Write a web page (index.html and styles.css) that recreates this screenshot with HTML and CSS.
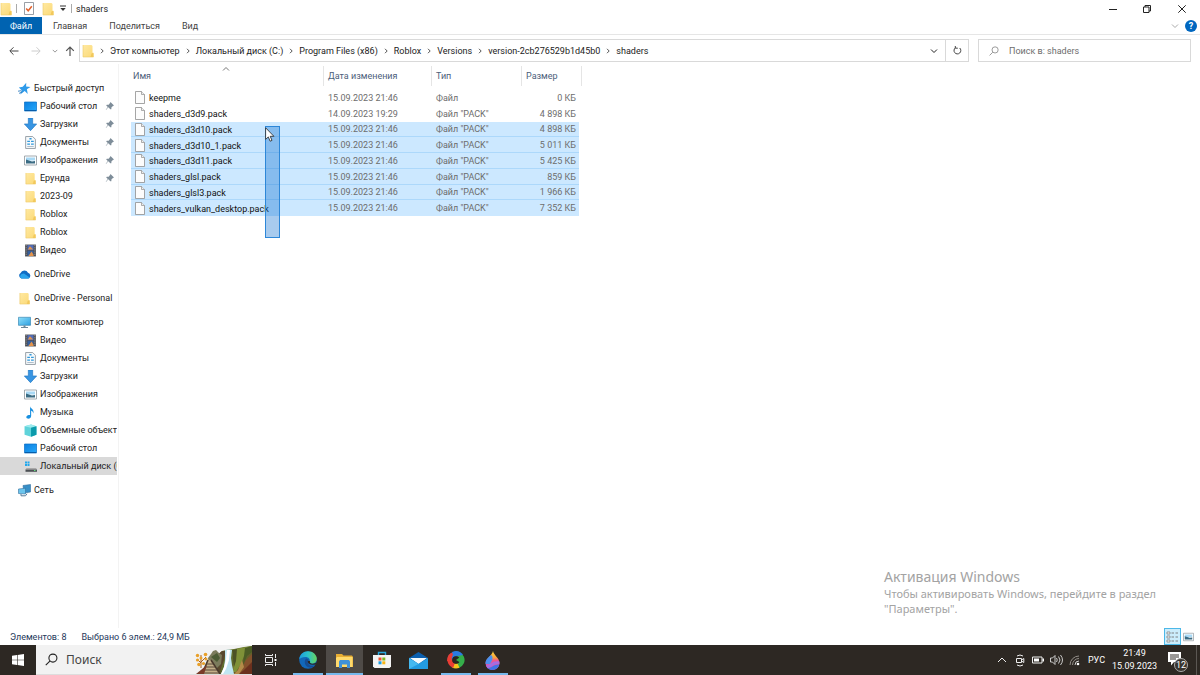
FILE: index.html
```html
<!DOCTYPE html>
<html lang="ru">
<head>
<meta charset="utf-8">
<meta name="viewport" content="width=device-width, initial-scale=1">
<title>shaders</title>
<link rel="stylesheet" href="styles.css">
</head>
<body>
<svg class="sprite" aria-hidden="true">
  <defs>
    <linearGradient id="g-folder" x1="0" y1="0" x2="1" y2="1"><stop offset="0" stop-color="#ffe9a2"/><stop offset="1" stop-color="#fbd976"/></linearGradient>
    <linearGradient id="g-screen" x1="0" y1="0" x2="1" y2="1"><stop offset="0" stop-color="#0b7fe0"/><stop offset="1" stop-color="#25a8fa"/></linearGradient>
    <linearGradient id="g-pc" x1="0" y1="0" x2="1" y2="1"><stop offset="0" stop-color="#8fe0fb"/><stop offset="1" stop-color="#2d9fe0"/></linearGradient>
    <linearGradient id="g-edge" x1="0" y1="0" x2="1" y2="0"><stop offset="0" stop-color="#1d9bdf"/><stop offset=".5" stop-color="#2cc3c8"/><stop offset="1" stop-color="#6ad45a"/></linearGradient>
    <linearGradient id="g-drop" x1="0" y1="0" x2="0" y2="1"><stop offset="0" stop-color="#ffd93a"/><stop offset=".35" stop-color="#f9a33f"/><stop offset=".5" stop-color="#f0568c"/><stop offset="1" stop-color="#c05ad0"/></linearGradient>
    <linearGradient id="g-cliff" x1="0" y1="0" x2="1" y2="1"><stop offset="0" stop-color="#7d8a3c"/><stop offset=".5" stop-color="#5d6a2c"/><stop offset="1" stop-color="#7a4526"/></linearGradient>
  </defs>
  <symbol id="folder" viewBox="0 0 12 14"><path d="M1 1h8.500l1 1v6.500l1 1V13H1z" fill="url(#g-folder)"/><path d="M9.500 9.500 11.500 8.800V13H8.500z" fill="#f2c85b"/><path d="M1 1v12h10.500" fill="none" stroke="#edc965" stroke-width=".6"/></symbol>
  <symbol id="file" viewBox="0 0 10 13"><path d="M.5.5h6l3 3v9h-9z" fill="#fcfcfc" stroke="#8e8e8e" stroke-width=".8"/><path d="M6.500.5v3h3" fill="#eee" stroke="#8e8e8e" stroke-width=".7"/></symbol>
  <symbol id="star" viewBox="0 0 12 12"><path d="M7.600.8 7.500 4.200l4 .4-3.300 2.200.8 4.200-2.800-2.600L2 11.500l1.400-4L.8 5l3.600-.6z" fill="#2f9bea"/><path d="M0 8.500 3 8M1 10.500l3-1.500" stroke="#2878bd" stroke-width=".8"/></symbol>
  <symbol id="desktop" viewBox="0 0 13 12"><path d="M.5 1.500h12v9H.5z" fill="url(#g-screen)" stroke="#0a70c6" stroke-width=".7"/><path d="M1 10h11" stroke="#075da9"/></symbol>
  <symbol id="down" viewBox="0 0 12 12"><path d="M4 0h4v5.500h3.700L6 11.700.3 5.500H4z" fill="#3895e2" stroke="#2177c2" stroke-width=".6"/></symbol>
  <symbol id="docs" viewBox="0 0 12 12"><path d="M1.500.5h6.500l2.500 2.500v8.500h-9z" fill="#f7fafc" stroke="#8b949c" stroke-width=".8"/><path d="M5 2.500h2M3 5h2.500M6.500 5H9M3 7.500h2.500M6.500 7.500H9" stroke="#3199db" stroke-width="1.300"/><path d="M3 9.700h6" stroke="#9babb8" stroke-width=".7"/></symbol>
  <symbol id="pics" viewBox="0 0 13 12"><path d="M.5 1.500h12v9H.5z" fill="#fff" stroke="#8c959c" stroke-width=".8"/><path d="M2 3h9v3H2z" fill="#a9d9f5"/><path d="m2 5 3 1 3 1 3-.5V9H2z" fill="#3b6c84"/></symbol>
  <symbol id="video" viewBox="0 0 12 12"><path d="M1 .5h10v11H1z" fill="#4b4d52"/><path d="M3.200 1h5.600v4.700H3.200z" fill="#526db8"/><path d="M3.200 6.300h5.600V11H3.200z" fill="#365f9d"/><path d="m3.500 5 2-3 3 3zM4 11l3-4 1.800 3v1z" fill="#e2934a"/><path d="M2 1v10M10 1v10" stroke="#b9b9b9" stroke-width=".7" stroke-dasharray="1 1"/></symbol>
  <symbol id="cloud" viewBox="0 0 13 12"><path d="M3.500 10A3 3 0 0 1 2.600 4.500 4 4 0 0 1 10 4.300 3 3 0 0 1 10.500 10z" fill="#0f6cc4"/><path d="M3.200 10a2.700 2.700 0 0 1 .5-4.500L6 5l6 4.300-1.500.7z" fill="#29a3ec"/></symbol>
  <symbol id="pc" viewBox="0 0 13 12"><path d="M.5.800h12v8H.5z" fill="url(#g-pc)" stroke="#3c89b5" stroke-width=".7"/><path d="M5.500 9h2v1.500h-2zM3 10.500h7v1H3z" fill="#6c8798"/></symbol>
  <symbol id="music" viewBox="0 0 12 12"><path d="M5.600.3c.5 2.400 4.200 2.800 3 6.600-.2-1.700-1-2.400-2-2.600v5C6.500 11.300 4.700 12 3.300 11.600 1.400 11 2 8.700 4.300 8.300l1.300-.1z" fill="#1890e0"/></symbol>
  <symbol id="cube" viewBox="0 0 12 12"><path d="m.5 2 6-1.500L11.500 2v8l-5 1.700L.5 10z" fill="#5fd3da"/><path d="m.5 2 6-1.500L11.500 2l-5 1.500z" fill="#9cebee"/><path d="M6.500 3.500 11.500 2v8l-5 1.700z" fill="#0b9aab"/></symbol>
  <symbol id="disk" viewBox="0 0 13 12"><path d="M1 1h2v2H1zM3.500 1h2v2h-2zM1 3.500h2v2H1zM3.500 3.500h2v2h-2z" fill="#20a8ed"/><path d="M2.500 7.500h9.500l1 1.500H1.500z" fill="#a9a9a9"/><path d="M1.500 9H13v2.300H1.500z" fill="#4c5054"/><path d="M10 10h1.500" stroke="#5ee07a"/></symbol>
  <symbol id="net" viewBox="0 0 13 12"><path d="m5 1 7.500-1v7.500L6 8.500z" fill="#378fc7" stroke="#346f9d" stroke-width=".6"/><path d="m.5 4.500 7-.8v5.800L.5 9z" fill="#6bc5ed" stroke="#346f9d" stroke-width=".6"/><path d="M3 9.500v1.800h4.500l1.500-2" fill="none" stroke="#577d9b"/></symbol>
  <symbol id="pin" viewBox="0 0 10 10"><path d="m5.500 1 3.500 3.500-1 .4-1.500 1.300-.2 2-1 .1-2-2L1 9l-.2-.3 2-2.700-1.600-1.500.6-.8 1.900.1L5 2z" fill="#7e8d99"/></symbol>
  <symbol id="next" viewBox="0 0 8 8"><path d="m3 1.800 2.200 2.200L3 6.200" fill="none" stroke="#555"/></symbol>
  <symbol id="chev" viewBox="0 0 8 8"><path d="m1 2.500 3 3 3-3" fill="none" stroke="currentColor"/></symbol>
  <symbol id="loupe" viewBox="0 0 12 12"><circle cx="7.300" cy="4.700" r="3.700" fill="none" stroke="currentColor"/><path d="M4.500 7.500.7 11.300" stroke="currentColor"/></symbol>
</svg>

<main class="window">
  <header class="titlebar">
    <svg class="i-folder"><use href="#folder"/></svg>
    <span class="bar"></span>
    <button class="quick props" aria-label="Свойства"><svg width="10" height="13" viewBox="0 0 10 13"><path d="M.5.5h9v12h-9z" fill="#fff" stroke="#7f8790" stroke-width=".8"/><path d="m2.200 6.500 2 2.300 3.600-4.500" fill="none" stroke="#e2612c" stroke-width="1.500"/></svg></button>
    <button class="quick" aria-label="Новая папка"><svg class="i-folder"><use href="#folder"/></svg></button>
    <button class="quick small" aria-label="Настройка панели"><svg width="6" height="7" viewBox="0 0 6 7"><path d="M0 1h6" stroke="#333"/><path d="M.3 3h5.400L3 6z" fill="#333"/></svg></button>
    <span class="bar"></span>
    <h1>shaders</h1>
    <div class="controls">
      <button aria-label="Свернуть"><svg width="8" height="8" viewBox="0 0 8 8"><path d="M0 4.500h8" stroke="#222"/></svg></button>
      <button aria-label="Восстановить"><svg width="8" height="8" viewBox="0 0 8 8"><path d="M.5 2h5.500v5.500H.5zM2 2V.5h5.500V6H6" fill="none" stroke="#222"/></svg></button>
      <button aria-label="Закрыть"><svg width="8" height="8" viewBox="0 0 8 8"><path d="m.3.3 7.400 7.400M7.700.3.3 7.700" stroke="#222"/></svg></button>
    </div>
  </header>
  <nav class="ribbon">
    <button class="filetab">Файл</button>
    <button>Главная</button>
    <button>Поделиться</button>
    <button>Вид</button>
    <div class="ribbon-end">
      <button class="expand" aria-label="Развернуть ленту"><svg class="i8"><use href="#chev"/></svg></button>
      <button class="help">?</button>
    </div>
  </nav>
  <div class="navrow">
    <div class="arrows">
      <button aria-label="Назад"><svg width="10" height="10" viewBox="0 0 10 10"><path d="M9.500 5H1M4.500 1.300.8 5l3.700 3.700" fill="none" stroke="#444"/></svg></button>
      <button aria-label="Вперед"><svg width="10" height="10" viewBox="0 0 10 10"><path d="M.5 5H9M5.500 1.300 9.200 5 5.500 8.700" fill="none" stroke="#ccc"/></svg></button>
      <button class="recent" aria-label="Последние"><svg class="i6"><use href="#chev"/></svg></button>
      <button class="up" aria-label="Вверх"><svg width="10" height="10" viewBox="0 0 10 10"><path d="M5 10V1M1.200 4.800 5 1l3.800 3.800" fill="none" stroke="#555" stroke-width="1.200"/></svg></button>
    </div>
    <div class="address">
      <svg class="i-folder"><use href="#folder"/></svg>
      <svg class="sep"><use href="#next"/></svg><a href="#">Этот компьютер</a>
      <svg class="sep"><use href="#next"/></svg><a href="#">Локальный диск (C:)</a>
      <svg class="sep"><use href="#next"/></svg><a href="#">Program Files (x86)</a>
      <svg class="sep"><use href="#next"/></svg><a href="#">Roblox</a>
      <svg class="sep"><use href="#next"/></svg><a href="#">Versions</a>
      <svg class="sep"><use href="#next"/></svg><a href="#">version-2cb276529b1d45b0</a>
      <svg class="sep"><use href="#next"/></svg><a href="#">shaders</a>
      <button class="drop" aria-label="Предыдущие расположения"><svg class="i8"><use href="#chev"/></svg></button>
      <button class="refresh" aria-label="Обновить"><svg width="9" height="9" viewBox="0 0 9 9"><path d="M6.700 2A3.400 3.400 0 1 1 2.500 1.700M2.300 0v2.200h2.500" fill="none" stroke="#444"/></svg></button>
    </div>
    <label class="find"><svg class="i10"><use href="#loupe"/></svg><input type="text" placeholder="Поиск в: shaders" aria-label="Поиск в: shaders"></label>
  </div>

  <div class="content">
    <nav class="side">
      <section>
        <a href="#"><svg><use href="#star"/></svg><span>Быстрый доступ</span></a>
        <a class="sub" href="#"><svg><use href="#desktop"/></svg><span>Рабочий стол</span><svg class="pin"><use href="#pin"/></svg></a>
        <a class="sub" href="#"><svg><use href="#down"/></svg><span>Загрузки</span><svg class="pin"><use href="#pin"/></svg></a>
        <a class="sub" href="#"><svg><use href="#docs"/></svg><span>Документы</span><svg class="pin"><use href="#pin"/></svg></a>
        <a class="sub" href="#"><svg><use href="#pics"/></svg><span>Изображения</span><svg class="pin"><use href="#pin"/></svg></a>
        <a class="sub" href="#"><svg><use href="#folder"/></svg><span>Ерунда</span><svg class="pin"><use href="#pin"/></svg></a>
        <a class="sub" href="#"><svg><use href="#folder"/></svg><span>2023-09</span></a>
        <a class="sub" href="#"><svg><use href="#folder"/></svg><span>Roblox</span></a>
        <a class="sub" href="#"><svg><use href="#folder"/></svg><span>Roblox</span></a>
        <a class="sub" href="#"><svg><use href="#video"/></svg><span>Видео</span></a>
      </section>
      <section><a href="#"><svg><use href="#cloud"/></svg><span>OneDrive</span></a></section>
      <section><a href="#"><svg><use href="#folder"/></svg><span>OneDrive - Personal</span></a></section>
      <section>
        <a href="#"><svg><use href="#pc"/></svg><span>Этот компьютер</span></a>
        <a class="sub" href="#"><svg><use href="#video"/></svg><span>Видео</span></a>
        <a class="sub" href="#"><svg><use href="#docs"/></svg><span>Документы</span></a>
        <a class="sub" href="#"><svg><use href="#down"/></svg><span>Загрузки</span></a>
        <a class="sub" href="#"><svg><use href="#pics"/></svg><span>Изображения</span></a>
        <a class="sub" href="#"><svg><use href="#music"/></svg><span>Музыка</span></a>
        <a class="sub" href="#"><svg><use href="#cube"/></svg><span>Объемные объекты</span></a>
        <a class="sub" href="#"><svg><use href="#desktop"/></svg><span>Рабочий стол</span></a>
        <a class="sub current" href="#"><svg><use href="#disk"/></svg><span>Локальный диск (C:)</span></a>
      </section>
      <section><a href="#"><svg><use href="#net"/></svg><span>Сеть</span></a></section>
    </nav>

    <div class="files">
      <table>
        <colgroup><col class="c-name"><col class="c-date"><col class="c-type"><col class="c-size"></colgroup>
        <thead><tr><th>Имя<svg class="sort" viewBox="0 0 8 8"><path d="m1 5.500 3-3 3 3" fill="none" stroke="#777"/></svg></th><th>Дата изменения</th><th>Тип</th><th>Размер</th></tr></thead>
        <tbody>
          <tr><td><svg class="doc"><use href="#file"/></svg>keepme</td><td>15.09.2023 21:46</td><td>Файл</td><td>0 КБ</td></tr>
          <tr><td><svg class="doc"><use href="#file"/></svg>shaders_d3d9.pack</td><td>14.09.2023 19:29</td><td>Файл "PACK"</td><td>4 898 КБ</td></tr>
          <tr class="sel"><td><svg class="doc"><use href="#file"/></svg>shaders_d3d10.pack</td><td>15.09.2023 21:46</td><td>Файл "PACK"</td><td>4 898 КБ</td></tr>
          <tr class="sel"><td><svg class="doc"><use href="#file"/></svg>shaders_d3d10_1.pack</td><td>15.09.2023 21:46</td><td>Файл "PACK"</td><td>5 011 КБ</td></tr>
          <tr class="sel"><td><svg class="doc"><use href="#file"/></svg>shaders_d3d11.pack</td><td>15.09.2023 21:46</td><td>Файл "PACK"</td><td>5 425 КБ</td></tr>
          <tr class="sel"><td><svg class="doc"><use href="#file"/></svg>shaders_glsl.pack</td><td>15.09.2023 21:46</td><td>Файл "PACK"</td><td>859 КБ</td></tr>
          <tr class="sel"><td><svg class="doc"><use href="#file"/></svg>shaders_glsl3.pack</td><td>15.09.2023 21:46</td><td>Файл "PACK"</td><td>1 966 КБ</td></tr>
          <tr class="sel"><td><svg class="doc"><use href="#file"/></svg>shaders_vulkan_desktop.pack</td><td>15.09.2023 21:46</td><td>Файл "PACK"</td><td>7 352 КБ</td></tr>
        </tbody>
      </table>
      <div class="marquee"></div>
      <svg class="cursor" viewBox="0 0 10 15"><path d="M.6.8v11.600l2.700-2.500 1.800 4.300 1.900-.8-1.800-4.100h3.700z" fill="#fff" stroke="#222" stroke-width=".8"/></svg>
      <aside class="activation"><h2>Активация Windows</h2><p>Чтобы активировать Windows, перейдите в раздел "Параметры".</p></aside>
    </div>
  </div>

  <footer class="status">
    <span>Элементов: 8</span><span>Выбрано 6 элем.: 24,9 МБ</span>
    <div class="views">
      <button class="on" aria-label="Таблица"><svg width="13" height="12" viewBox="0 0 13 12"><path d="M1 1h3v2H1zM1 5h3v2H1zM1 9h3v2H1z" fill="#fff" stroke="#777" stroke-width=".7"/><path d="M5.500 2H8M9.500 2H12M5.500 6H8M9.500 6H12M5.500 10H8M9.500 10H12" stroke="#777" stroke-width=".9"/></svg></button>
      <button aria-label="Крупные значки"><svg width="11" height="10"><use href="#pics"/></svg></button>
    </div>
  </footer>
</main>

<footer class="taskbar">
  <button class="start" aria-label="Пуск"><svg width="12" height="12" viewBox="0 0 12 12"><path d="m0 1.700 5-.7v4.700H0zM5.600.9 12 0v5.700H5.600zM0 6.300h5V11l-5-.7zM5.600 6.300H12V12l-6.400-.9z" fill="#fff"/></svg></button>
  <label class="search"><svg width="13" height="13"><use href="#loupe"/></svg><input type="text" placeholder="Поиск" aria-label="Поиск">
    <svg class="scene" viewBox="0 0 57 28">
      <path d="M22 28 23 9l4-4 4-1 8-1 10-2 8-1v28z" fill="url(#g-cliff)"/>
      <path d="M22 28V9l5-4h4l-2 9-3 8-1 6z" fill="#58492e"/>
      <path d="M36 4 57 0v5L49 10l-3 8-5 8h-3l1-12z" fill="#7f9138"/>
      <path d="m37 4 5-1-1 12-2 6z" fill="#4c5226"/>
      <path d="m50 2 7-2v6l-5 4-4 9 1-9z" fill="#4b5c25"/>
      <path d="m57 8-6 6-4 8-7 6h17z" fill="#84512c"/>
      <path d="m57 16-8 8-5 4h13z" fill="#6b301d"/>
      <path d="m47 14-4 10-4 4h5l5-7z" fill="#b38b48"/>
      <path d="M30 4q4-1 7 0l-1 8 1 7 2 9H26l3-7 1-7z" fill="#bfe6f2"/>
      <path d="m32 4 3 0-1 10-3 9-3 5h-2l3-7 2-8z" fill="#fff"/>
      <path d="m13 12 3-4 2-3 3-1 3 3 3 2-1 9-4 4-8-5z" fill="#7b7b5c"/>
      <path d="m16 11 6-4 3 5-3 4z" fill="#4c5c35"/>
      <path d="M13 14h3l9 14H7z" fill="#c3ae88"/>
      <path d="M13 14 7 28M16 14l9 14" fill="none" stroke="#4a392c" stroke-width="1.600"/>
      <path d="M12 18h6M11 21h9M10 24h12M8 27h16" stroke="#5b4b3c" stroke-width="1.100"/>
      <path d="m1 28 11-9-3 9z" fill="#7a3b28"/>
      <path d="M6 22V9M6 16l5-5M6 17l-4-4" fill="none" stroke="#a9601f"/>
      <g fill="#e8a02a"><circle cx="2.500" cy="9.500" r="1.700"/><circle cx="2.500" cy="14" r="1.600"/><circle cx="6" cy="12" r="1.500"/><circle cx="10.500" cy="8.500" r="1.800"/><circle cx="11" cy="13" r="1.500"/><circle cx="4" cy="18.500" r="1.800"/><circle cx="8.500" cy="17.500" r="1.600"/></g>
    </svg>
  </label>
  <div class="apps">
    <button aria-label="Представление задач"><svg width="13" height="12" viewBox="0 0 13 12"><path d="M1.500 3.500h7v5h-7zM1.500 0v1.500h7V0M1.500 12v-1.500h7V12M11.500 0v4M11.500 8v4" fill="none" stroke="#eee"/><path d="M10.500 5h2v2h-2z" fill="#fff"/></svg></button>
    <button class="open" aria-label="Edge"><svg width="18" height="18" viewBox="0 0 18 18"><circle cx="9" cy="9" r="8.800" fill="#1268b9"/><path d="M.3 8.300C.7 3.200 4.400.2 9 .2c5 0 8.800 3.500 8.800 7.600 0 3-2 4.900-4.700 4.900-2 0-3-.8-2.600-1.600C11.600 8.300 9.700 6 6.300 6 3.500 6 1.100 7.200.3 8.300z" fill="url(#g-edge)"/><path d="M7.200 7.500c-2 1.700-2 5.700.7 8 2.700 2 6 1.300 8.400-1.300-2.800 1.200-6.400.5-7.500-2.300-.8-1.800.2-3 .8-3.500z" fill="#164d93"/><path d="M8.700 9.800c-.5 3.200 3.500 4.500 7.700 3.800l1.400-2c-3.600 2-7.800 1.300-6.700-1.600z" fill="#2b2825"/></svg></button>
    <button class="open active" aria-label="Проводник"><svg width="17" height="15" viewBox="0 0 17 15"><path d="M0 1h6l1.500 1.500H16L17 4v10H0z" fill="#e8ae33"/><path d="M1 4h15.500v10H0V5z" fill="#ffda6c"/><path d="M3 8.500 4 7h9l1 1.500V15h-3v-3.500H6V15H3z" fill="#3f91d8"/></svg></button>
    <button aria-label="Store"><svg width="18" height="18" viewBox="0 0 18 18"><path d="M5.500 5V1.500h7V5" fill="none" stroke="#28a7dd" stroke-width="1.400"/><path d="M0 4h18v11.500L16.500 17h-15L0 15.500z" fill="#f4f4f4"/><path d="M5.500 6.500h3v3h-3z" fill="#ef5030"/><path d="M9.300 6.500h3v3h-3z" fill="#7db922"/><path d="M5.500 10.300h3v3h-3z" fill="#199ee4"/><path d="M9.300 10.300h3v3h-3z" fill="#f9b516"/></svg></button>
    <button aria-label="Почта"><svg width="19" height="17" viewBox="0 0 19 17"><path d="M0 6 9.500 0 19 6v11H0z" fill="#0b5fae"/><path d="M1 6h17l-8.500 6z" fill="#f5fafc"/><path d="m0 6 9.500 6L19 6v11H0z" fill="#239be1"/><path d="m0 6 9.500 6L0 17z" fill="#45b9f0"/></svg></button>
    <button class="open" aria-label="Браузер"><svg width="18" height="18" viewBox="0 0 18 18"><g fill="none" stroke-width="5"><path d="M8.500 3a6 6 0 0 1 6.200 4.100" stroke="#35ae4a"/><path d="M14.500 6.500A6 6 0 0 1 11 14.700" stroke="#35ae4a"/><path d="M11.500 14.500A6 6 0 0 1 6 14.200" stroke="#f4c51d"/><path d="M7 14.700A6 6 0 0 1 3.200 7.500" stroke="#ea3d34"/><path d="M3.100 8A6 6 0 0 1 9.500 3.100" stroke="#2a7be2"/></g><path d="M0 10Q0 2 7 1L5 6 4 11z" fill="#ea3d34"/><path d="M5 1q7-3 11 3l-5 1-5-1z" fill="#2a7be2"/><circle cx="9" cy="9" r="3.800" fill="#292521"/><path d="m9 9 4-3 1 6z" fill="#35ae4a"/></svg></button>
    <button class="open" aria-label="Краски"><svg width="15" height="19" viewBox="0 0 15 19"><path d="M8 0c.5 4 6.500 7 6.500 12a7 7 0 0 1-14 0C.500 7.500 7 5 8 0z" fill="url(#g-drop)"/><path d="M.6 13C.2 8 4 6 6 4c3 2 1 6-1 9z" fill="#4a90f0"/><path d="M.9 14.500C5 14 8 9 14.400 10.500v2.800C9 12 6 17 2.500 17.200z" fill="#a96be0"/><path d="M2.500 17C7 17 9 13 14.400 13.500 13 19 6.500 20.500 2.500 17z" fill="#3f74e8"/></svg></button>
  </div>
  <div class="tray">
    <button aria-label="Скрытые значки"><svg width="10" height="8" viewBox="0 0 10 8"><path d="m1 6 4-4 4 4" fill="none" stroke="#eee"/></svg></button>
    <button aria-label="Камера"><svg width="10" height="13" viewBox="0 0 10 13"><path d="M1.500 4.500h5v4h-5zM6.500 6l2.300-1.500v4L6.500 7" fill="none" stroke="#eee"/><path d="M2 2q3-2 6 0M2 11q3 2 6 0" fill="none" stroke="#eee"/></svg></button>
    <button aria-label="Батарея"><svg width="12" height="8" viewBox="0 0 12 8"><path d="M.5 1h9.500v6H.5z" fill="none" stroke="#eee"/><path d="M2 2.500h5v3H2zM10.500 2.500H12v3h-1.500z" fill="#fff"/></svg></button>
    <button aria-label="Громкость"><svg width="13" height="12" viewBox="0 0 13 12"><path d="M.5 4h2L5 1.500v9L2.500 8h-2zM6.500 4q1.500 2 0 4M8.500 2.500q3 3.500 0 7M10.500 1q4 5 0 10" fill="none" stroke="#ddd" stroke-width=".9"/></svg></button>
    <button aria-label="Сеть"><svg width="11" height="11" viewBox="0 0 11 11"><g fill="none" stroke="#938e89"><path d="M1 10A9 9 0 0 1 10 1"/><path d="M3.500 10A6.500 6.500 0 0 1 10 3.500"/></g><path d="M6 10a4 4 0 0 1 4-4" fill="none" stroke="#ccc"/><circle cx="9" cy="9" r="1.300" fill="#fff"/></svg></button>
    <button class="lang">РУС</button>
    <time class="clock" datetime="2023-09-15T21:49"><span>21:49</span><span>15.09.2023</span></time>
    <button class="note" aria-label="Уведомления: 12"><svg width="13" height="14" viewBox="0 0 13 14"><path d="M0 0h13v10H6l-3 3.500V10H0z" fill="#fff"/><path d="M2 3h9M2 5h9M2 7h6" stroke="#37322e"/></svg><span>12</span></button>
  </div>
</footer>
</body>
</html>
```
FILE: styles.css
```css
* { box-sizing: border-box; }
body {
  margin: 0;
  height: 100vh;
  display: flex;
  flex-direction: column;
  overflow: hidden;
  background: #fff;
  color: #222;
  font: 9px/12px Roboto, "Noto Sans", sans-serif;
}
.sprite { position: absolute; width: 0; height: 0; }
svg { display: block; flex: none; }
button { border: 0; padding: 0; margin: 0; background: none; font: inherit; color: inherit; display: flex; align-items: center; justify-content: center; }
a { color: inherit; text-decoration: none; white-space: nowrap; }
input { border: 0; padding: 0; background: none; font: inherit; outline: 0; min-width: 0; }
h1, h2, p { margin: 0; font-weight: normal; font-size: inherit; }
.i-folder { width: 12px; height: 14px; }
.i6 { width: 6px; height: 6px; }
.i8 { width: 8px; height: 8px; }
.i10 { width: 10px; height: 10px; }

.window { flex: 1; min-height: 0; display: flex; flex-direction: column; }
.titlebar { height: 17px; display: flex; align-items: center; gap: 4px; }
.bar { width: 1px; height: 9px; background: #aaa; }
.quick { width: 14px; }
.quick.props { width: 16px; }
.quick.small { width: 8px; }
.titlebar h1 { color: #222; }
.controls { margin-left: auto; display: flex; align-self: stretch; }
.controls button { width: 34px; }
.controls button:last-child { width: 36px; }

.ribbon { height: 18px; display: flex; border-bottom: 1px solid #e6e6e6; color: #444; }
.ribbon button { padding: 0 11px; }
.ribbon .filetab { width: 42px; padding: 0; background: #0063b1; color: #fff; }
.ribbon-end { margin-left: auto; display: flex; align-items: center; gap: 6px; padding-right: 3px; }
.ribbon .expand { padding: 0; color: #aaa; }
.ribbon .help { width: 12px; height: 12px; padding: 0; border-radius: 50%; background: #0067c0; color: #fff; font-weight: bold; }

.navrow { height: 29px; display: flex; align-items: center; padding: 2px 9px 0 8px; }
.arrows { width: 71px; display: flex; align-items: center; gap: 10px; }
.arrows button { width: 12px; }
.arrows .recent { width: 6px; color: #777; margin-right: -4px; }
.address { flex: 1; height: 23px; display: flex; align-items: center; border: 1px solid #d9d9d9; padding-left: 2px; }
.sep { width: 8px; height: 8px; margin: 0 4px; }
.drop { width: 22px; height: 21px; margin-left: auto; }
.refresh { width: 23px; height: 21px; border-left: 1px solid #d9d9d9; }
.find { width: 213px; height: 23px; margin-left: 9px; border: 1px solid #d9d9d9; display: flex; align-items: center; gap: 10px; padding-left: 10px; color: #888; }
.find input { flex: 1; }
.find input::placeholder { color: #6d6d6d; opacity: 1; }

.content { flex: 1; min-height: 0; display: flex; }
.side { width: 119px; padding-top: 15px; border-right: 1px solid #f3f3f3; display: flex; flex-direction: column; gap: 6px; }
.side a { display: flex; align-items: center; height: 18px; padding-left: 18px; gap: 3px; margin-right: 1px; overflow: hidden; }
.side a.sub { padding-left: 24px; }
.side svg { width: 13px; height: 13px; }
.side .pin { width: 10px; height: 10px; margin-left: auto; margin-right: 2px; }
.side .current { background: #d9d9d9; }

.files { flex: 1; position: relative; padding-left: 12px; }
table { width: 448px; height: 152px; table-layout: fixed; border-collapse: collapse; }
.c-name { width: 192px; }
.c-date { width: 108px; }
.c-type { width: 90px; }
.c-size { width: 58px; }
th { position: relative; height: 26px; padding: 0 0 2px 5px; text-align: left; font-weight: normal; color: #4c607a; }
th:first-child { padding-left: 2px; }
th::after { content: ""; position: absolute; right: -1px; top: 2px; height: 20px; width: 1px; background: #e5e5e5; }
th:last-child::after { right: -3px; }
.sort { position: absolute; left: 91px; top: 1px; width: 8px; height: 8px; }
td { padding: 0 0 0 5px; line-height: 12px; color: #6d6d6d; white-space: nowrap; }
td:first-child { padding-left: 4px; color: #111; }
td:last-child { text-align: right; padding-right: 3px; }
.doc { display: inline-block; width: 10px; height: 13px; margin-right: 4px; vertical-align: -3px; }
.sel { background: #cce8ff; box-shadow: inset 0 -1px #acd8fb; }
.sel:last-child { box-shadow: none; }
.marquee { position: absolute; left: 146px; top: 62px; width: 15px; height: 112px; background: rgba(0, 102, 204, .34); border: 1px solid #2d87d8; }
.cursor { position: absolute; left: 146px; top: 63px; width: 10px; height: 15px; }
.activation { position: absolute; right: 36px; bottom: 12px; width: 280px; color: #a3a3a3; font: 11px/15px "Noto Sans", sans-serif; }
.activation h2 { font-size: 14px; line-height: 18px; }

.status { height: 17px; display: flex; align-items: center; padding: 0 4px 0 10px; gap: 15px; color: #1e395b; }
.views { margin-left: auto; display: flex; }
.views button { width: 15px; height: 17px; }
.views .on { width: 17px; background: #cbecfb; border: 1px solid #4cb8e8; }

.taskbar { height: 30px; display: flex; background: #2d2823; color: #fff; }
.start { width: 36px; }
.search { width: 216px; background: #f2f2f2; display: flex; align-items: center; padding-left: 9px; gap: 8px; color: #222; font: 12px/16px "Noto Sans", sans-serif; border-bottom: 1px solid #ddd; }
.search input { flex: 1; width: 0; }
.search input::placeholder { color: #444; opacity: 1; }
.scene { width: 57px; height: 28px; align-self: flex-end; }
.apps { display: flex; }
.apps button { width: 37px; position: relative; }
.apps .open::after { content: ""; position: absolute; left: 4px; right: 3px; bottom: 0; height: 2px; background: #76b9ed; }
.apps .active { background: #4f4b47; }
.apps .active::after { left: 0; right: 0; }
.tray { margin-left: auto; display: flex; align-items: center; padding-right: 3px; }
.tray button { width: 18px; height: 30px; }
.tray .lang { width: 27px; }
.clock { width: 49px; display: flex; flex-direction: column; align-items: center; line-height: 13px; }
.tray .note { width: 38px; position: relative; border-right: 1px solid #5b5753; }
.note svg { margin-right: 6px; margin-bottom: 2px; }
.note span { position: absolute; left: 15px; top: 13px; width: 14px; height: 14px; line-height: 12px; border: 1px solid #aaa; border-radius: 50%; background: #39342f; }
```
